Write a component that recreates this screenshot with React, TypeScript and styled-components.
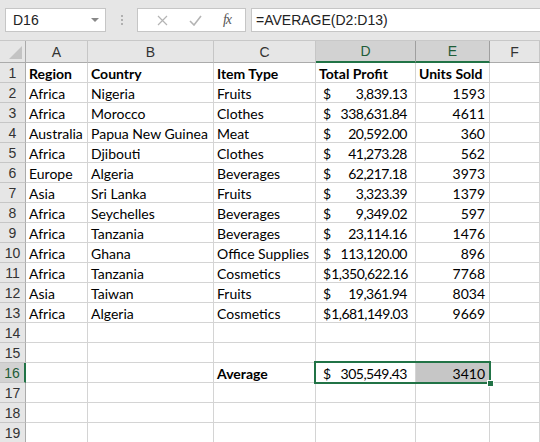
import React from "react";
import styled, { createGlobalStyle } from "styled-components";

const GlobalStyle = createGlobalStyle`
  html, body {
    margin: 0;
    padding: 0;
    background: #ffffff;
    overflow: hidden;
  }
  body {
    font-family: Lato, "Liberation Sans", sans-serif;
  }
`;

const GREEN = "#217346";
const GRID = "#d4d4d4";

const Sheet = styled.div`
  width: 540px;
  height: 442px;
  overflow: hidden;
  background: #ffffff;
  display: flex;
  flex-direction: column;
`;

const Toolbar = styled.div`
  flex-shrink: 0;
  height: 41px;
  box-sizing: border-box;
  background: #e6e6e6;
  border-bottom: 1px solid #c8c8c8;
  display: flex;
  align-items: flex-start;
  padding: 8px 0 0 5px;
`;

const NameBox = styled.div`
  width: 101px;
  height: 24px;
  box-sizing: border-box;
  background: #fff;
  border: 1px solid #c6c6c6;
  display: flex;
  align-items: center;
  justify-content: space-between;
  padding: 0 6px 0 7px;
  font-family: "Liberation Sans", sans-serif;
  font-size: 14px;
  color: #222;
`;

const Caret = styled.span`
  width: 0;
  height: 0;
  border-left: 4px solid transparent;
  border-right: 4px solid transparent;
  border-top: 4px solid #888;
`;

const Dots = styled.div`
  width: 31px;
  height: 24px;
  display: flex;
  flex-direction: column;
  align-items: center;
  justify-content: center;
  gap: 2px;
  span {
    width: 2px;
    height: 2px;
    background: #b0b0b0;
  }
`;

const ButtonBox = styled.div`
  width: 109px;
  height: 24px;
  box-sizing: border-box;
  background: #fff;
  border: 1px solid #c6c6c6;
  display: flex;
  align-items: center;
  padding: 0 0 0 8px;
`;

const IconSlot = styled.div<{ $w: number }>`
  width: ${(p) => p.$w}px;
  height: 22px;
  display: flex;
  align-items: center;
  justify-content: center;
`;

const Fx = styled.span`
  font-family: "Liberation Serif", serif;
  font-style: italic;
  font-size: 14px;
  color: #555;
  letter-spacing: -1px;
`;

const FormulaInput = styled.div`
  flex: 1;
  height: 24px;
  margin-left: 5px;
  box-sizing: border-box;
  background: #fff;
  border: 1px solid #c6c6c6;
  border-right: none;
  display: flex;
  align-items: center;
  padding-left: 4px;
  font-family: "Liberation Sans", sans-serif;
  font-size: 14px;
  color: #222;
`;

const Grid = styled.div`
  flex-shrink: 0;
  position: relative;
  display: grid;
  grid-template-columns: 26px 62px 126px 102px 100px 74px 1fr;
  grid-template-rows: 22px;
  grid-auto-rows: 20px;
  font-size: 14px;
  color: #000;
`;

const Corner = styled.div`
  background: #e6e6e6;
  border-right: 1px solid #ababab;
  border-bottom: 1px solid #ababab;
  box-sizing: border-box;
  position: relative;
  &::after {
    content: "";
    position: absolute;
    right: 3px;
    bottom: 3px;
    width: 0;
    height: 0;
    border-left: 13px solid transparent;
    border-bottom: 13px solid #c3c3c3;
  }
`;

const ColHead = styled.div<{ $sel?: boolean }>`
  box-sizing: border-box;
  background: ${(p) => (p.$sel ? "#d2d2d2" : "#e6e6e6")};
  border-right: 1px solid ${(p) => (p.$sel ? "#9f9f9f" : "#c6c6c6")};
  border-bottom: ${(p) => (p.$sel ? `2px solid ${GREEN}` : "1px solid #ababab")};
  display: flex;
  align-items: center;
  justify-content: center;
  font-family: "Liberation Sans", sans-serif;
  font-size: 14px;
  color: ${(p) => (p.$sel ? "#1e5c38" : "#333")};
`;

const RowHead = styled.div<{ $sel?: boolean }>`
  box-sizing: border-box;
  background: ${(p) => (p.$sel ? "#d2d2d2" : "#e6e6e6")};
  border-right: ${(p) => (p.$sel ? `2px solid ${GREEN}` : "1px solid #ababab")};
  border-bottom: 1px solid #c6c6c6;
  display: flex;
  align-items: center;
  justify-content: center;
  font-family: "Liberation Sans", sans-serif;
  font-size: 14px;
  color: ${(p) => (p.$sel ? "#1e5c38" : "#333")};
`;

const Cell = styled.div<{ $bold?: boolean; $align?: string; $shade?: boolean }>`
  box-sizing: border-box;
  border-right: 1px solid ${GRID};
  border-bottom: 1px solid ${GRID};
  background: ${(p) => (p.$shade ? "#c6c6c6" : "#fff")};
  display: flex;
  align-items: center;
  justify-content: ${(p) => p.$align ?? "flex-start"};
  padding: 1px 4px 0 3px;
  white-space: nowrap;
  font-weight: ${(p) => (p.$bold ? 700 : 400)};
`;

const Money = styled(Cell)`
  justify-content: space-between;
  padding: 1px 8px 0 7px;
`;

const Amount = styled.span`
  letter-spacing: -0.5px;
`;

const Selection = styled.div`
  position: absolute;
  left: 314px;
  top: 320px;
  width: 177px;
  height: 23px;
  box-sizing: border-box;
  border: 2px solid ${GREEN};
  pointer-events: none;
  &::after {
    content: "";
    position: absolute;
    right: -5px;
    bottom: -5px;
    width: 5px;
    height: 5px;
    background: ${GREEN};
    border: 1px solid #fff;
  }
`;

type Row = [string, string, string, string, number];

const data: Row[] = [
  ["Africa", "Nigeria", "Fruits", "3,839.13", 1593],
  ["Africa", "Morocco", "Clothes", "338,631.84", 4611],
  ["Australia", "Papua New Guinea", "Meat", "20,592.00", 360],
  ["Africa", "Djibouti", "Clothes", "41,273.28", 562],
  ["Europe", "Algeria", "Beverages", "62,217.18", 3973],
  ["Asia", "Sri Lanka", "Fruits", "3,323.39", 1379],
  ["Africa", "Seychelles", "Beverages", "9,349.02", 597],
  ["Africa", "Tanzania", "Beverages", "23,114.16", 1476],
  ["Africa", "Ghana", "Office Supplies", "113,120.00", 896],
  ["Africa", "Tanzania", "Cosmetics", "1,350,622.16", 7768],
  ["Asia", "Taiwan", "Fruits", "19,361.94", 8034],
  ["Africa", "Algeria", "Cosmetics", "1,681,149.03", 9669],
];

const columns = ["A", "B", "C", "D", "E", "F"];

const App: React.FC = () => {
  const blank = (r: number, n: number) =>
    Array.from({ length: n }, (_, i) => <Cell key={`${r}_b${i}`} />);

  return (
    <Sheet>
      <GlobalStyle />
      <Toolbar>
        <NameBox>
          D16
          <Caret />
        </NameBox>
        <Dots>
          <span />
          <span />
          <span />
        </Dots>
        <ButtonBox>
          <IconSlot $w={32}>
            <svg width="11" height="11" viewBox="0 0 11 11">
              <path d="M1 1 L10 10 M10 1 L1 10" stroke="#b4b4b4" strokeWidth="1.2" fill="none" />
            </svg>
          </IconSlot>
          <IconSlot $w={34}>
            <svg width="13" height="11" viewBox="0 0 13 11">
              <path d="M1 6 L5 10 L12 1" stroke="#b4b4b4" strokeWidth="1.6" fill="none" />
            </svg>
          </IconSlot>
          <IconSlot $w={30}>
            <Fx>fx</Fx>
          </IconSlot>
        </ButtonBox>
        <FormulaInput>=AVERAGE(D2:D13)</FormulaInput>
      </Toolbar>

      <Grid>
        <Corner />
        {columns.map((c) => (
          <ColHead key={c} $sel={c === "D" || c === "E"}>
            {c}
          </ColHead>
        ))}

        <RowHead>1</RowHead>
        <Cell $bold>Region</Cell>
        <Cell $bold>Country</Cell>
        <Cell $bold>Item Type</Cell>
        <Cell $bold>Total Profit</Cell>
        <Cell $bold>Units Sold</Cell>
        <Cell />

        {data.map((row, i) => (
          <React.Fragment key={i}>
            <RowHead>{i + 2}</RowHead>
            <Cell>{row[0]}</Cell>
            <Cell>{row[1]}</Cell>
            <Cell>{row[2]}</Cell>
            <Money>
              <span>$</span>
              <Amount>{row[3]}</Amount>
            </Money>
            <Cell $align="flex-end">{row[4]}</Cell>
            <Cell />
          </React.Fragment>
        ))}

        {[14, 15].map((r) => (
          <React.Fragment key={r}>
            <RowHead>{r}</RowHead>
            {blank(r, 6)}
          </React.Fragment>
        ))}

        <RowHead $sel>16</RowHead>
        <Cell />
        <Cell />
        <Cell $bold>Average</Cell>
        <Money>
          <span>$</span>
          <Amount>305,549.43</Amount>
        </Money>
        <Cell $align="flex-end" $shade>
          3410
        </Cell>
        <Cell />

        {[17, 18, 19].map((r) => (
          <React.Fragment key={r}>
            <RowHead>{r}</RowHead>
            {blank(r, 6)}
          </React.Fragment>
        ))}

        <Selection />
      </Grid>
    </Sheet>
  );
};

export default App;
